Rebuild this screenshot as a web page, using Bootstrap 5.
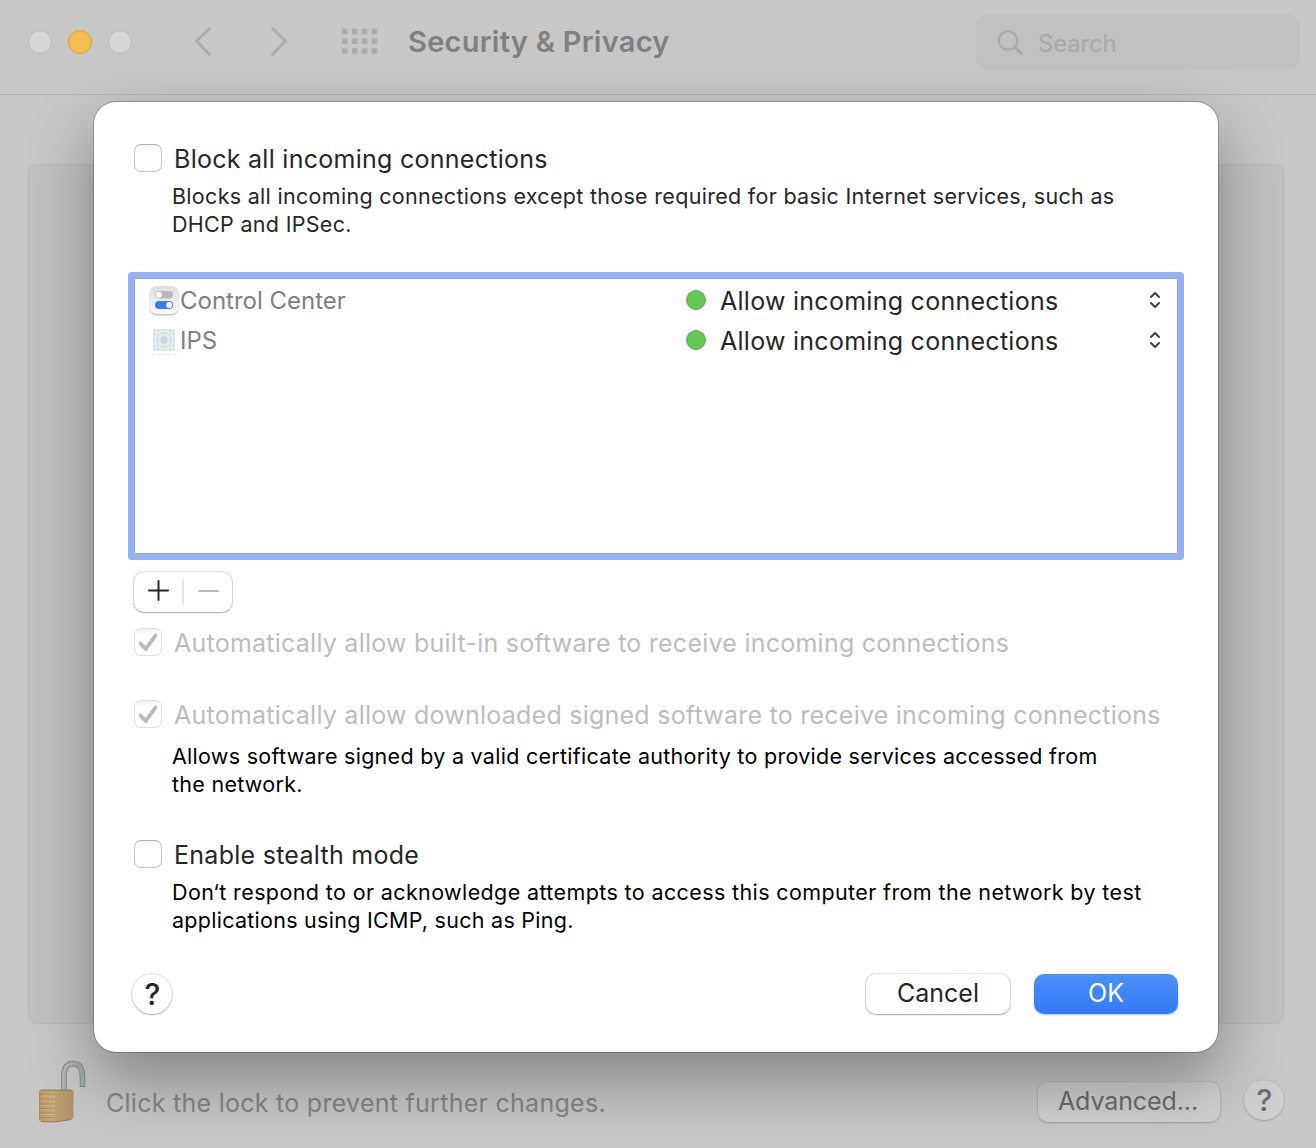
<!DOCTYPE html>
<html lang="en">
<head>
    <meta charset="UTF-8">
    <meta name="viewport" content="width=device-width, initial-scale=1.0">
    <title>Security &amp; Privacy</title>
    <link rel="stylesheet" href="https://cdn.jsdelivr.net/npm/bootstrap@5.3.0/dist/css/bootstrap.min.css">
    <style>
        body {
            font-family: Inter, "Liberation Sans", sans-serif;
            font-size: 25px;
            line-height: 28px;
            letter-spacing: .27px;
            color: #262626;
            background-color: #c7c7c7;
        }
        .window {
            height: 1148px;
        }
        .toolbar {
            height: 95px;
            padding: 0 16px 0 28px;
            border-bottom: 1px solid #b3b3b3;
        }
        .toolbar-items {
            height: 84px;
        }
        .light {
            width: 24px;
            height: 24px;
            border: 1px solid #b7b7b7;
            background-color: #d6d6d6;
        }
        .light-min {
            border-color: #dc9f38;
            background-color: #f5bf4f;
        }
        .window-title {
            font-size: 29px;
            font-weight: 600;
            color: #808080;
        }
        .search-box {
            width: 324px;
            height: 56px;
            border-radius: 12px;
            background-color: #c1c1c1;
            color: #a9a9a9;
            font-size: 24px;
            letter-spacing: -.2px;
        }
        .pane {
            flex: none;
            margin: 69px 32px 0 28px;
            height: 860px;
            border: 1px solid #b9b9b9;
            border-radius: 9px;
            background-color: #c1c1c1;
        }
        .window-footer {
            height: 124px;
            padding: 30px 32px 0 34px;
            gap: 24px;
        }
        .lock-text {
            color: #868686;
            padding-top: 35px;
            margin-left: -12px;
        }
        .sheet {
            left: 94px;
            top: 102px;
            width: 1124px;
            height: 950px;
            padding: 42px 40px 38px;
            border-radius: 22px;
            background-color: #fff;
            box-shadow: 0 0 0 1px rgba(0, 0, 0, .22), 0 28px 64px rgba(0, 0, 0, .34);
        }
        .option {
            height: 28px;
            gap: 12px;
        }
        .option-text {
            padding-top: 2px;
        }
        .tick {
            width: 28px;
            height: 28px;
            border: 1px solid #c6c6c6;
            border-top-color: #b5b5b5;
            border-radius: 7px;
            background: linear-gradient(#f3f3f3, #fff 25%);
        }
        .option-off {
            color: #bdbdbd;
            letter-spacing: .24px;
        }
        .option-off .tick {
            border-color: #dedede;
        }
        .tick svg {
            display: block;
            margin: -1px;
        }
        .note {
            font-size: 21.5px;
            letter-spacing: .3px;
            padding-left: 38px;
            white-space: nowrap;
        }
        .note-dark {
            color: #000;
            letter-spacing: .28px;
        }
        .note-wide {
            letter-spacing: .38px;
        }
        .note-end {
            letter-spacing: .27px;
        }
        .app-list {
            height: 276px;
            margin-top: 40px;
            padding-top: 2px;
            border: 1px solid #8ba4e3;
            border-radius: 1px;
            box-shadow: 0 0 0 6px #96b1f7;
        }
        .app-row {
            height: 40px;
            padding: 0 12px 0 13px;
        }
        .app-name {
            width: 538px;
            color: #7f7f7f;
            font-size: 24px;
            letter-spacing: 0;
        }
        .dot {
            width: 20px;
            height: 20px;
            margin: -2px 14px 0 0;
            border: 1px solid #57b24b;
            background-color: #62c554;
        }
        .push {
            height: 40px;
            border: 0;
            border-radius: 10px;
            color: #262626;
            background-color: #fff;
            box-shadow: 0 0 0 1px rgba(0, 0, 0, .1), 0 1px 2px rgba(0, 0, 0, .26);
        }
        .sheet-push {
            width: 144px;
            padding: 0 0 2px;
        }
        .push-ok {
            color: #fff;
            background: linear-gradient(#4b91f8, #3478f6);
            box-shadow: 0 1px 2px rgba(52, 120, 246, .4);
        }
        .plus-minus {
            width: 98px;
            margin-top: 18px;
        }
        .help {
            width: 40px;
            padding: 0 0 0 1px;
            border-radius: 50%;
            font-size: 30px;
            font-weight: 500;
        }
        .push-dim {
            margin-top: 26px;
            color: #6b6b6b;
            background-color: rgba(255, 255, 255, .14);
            box-shadow: 0 0 0 1px rgba(0, 0, 0, .05), 0 1px 2px rgba(0, 0, 0, .16);
        }
        .advanced {
            width: 182px;
            margin-top: 28px;
            padding: 0 2px 2px 0;
            letter-spacing: -.1px;
        }
    </style>
</head>
<body>
    <div class="window position-relative overflow-hidden d-flex flex-column">
        <header class="toolbar flex-shrink-0">
            <div class="toolbar-items d-flex align-items-center">
                <div class="d-flex gap-3">
                    <span class="light rounded-circle"></span>
                    <span class="light light-min rounded-circle"></span>
                    <span class="light rounded-circle"></span>
                </div>
                <svg class="ms-5" width="130" height="40" viewBox="0 0 130 40" fill="none" stroke="#acacac" stroke-width="2.800" stroke-linecap="round" stroke-linejoin="round">
                    <path d="M29.500 6.500L16.500 19L29.500 32.500M92.500 6.500L105.500 19L92.500 32.500"/>
                </svg>
                <svg width="98" height="40" viewBox="310 22 98 40" fill="none" stroke="#acacac" stroke-width="5.500" stroke-dasharray="5.500 4.400">
                    <path d="M342 31.500H378M342 41.300H378M342 51H378"/>
                </svg>
                <span class="window-title">Security &amp; Privacy</span>
                <div class="search-box d-flex align-items-center ms-auto">
                    <svg width="62" height="56" viewBox="0 0 62 56" fill="none" stroke="#a9a9a9" stroke-linecap="round">
                        <circle cx="32" cy="26.500" r="9.300" stroke-width="2"/>
                        <path d="M39 33.500L45.500 39.500" stroke-width="3"/>
                    </svg>
                    <span class="pt-1">Search</span>
                </div>
            </div>
        </header>

        <main class="pane"></main>

        <footer class="window-footer d-flex align-items-start">
            <svg width="60" height="80" viewBox="34 1054 60 80">
                <defs>
                    <linearGradient id="brassLeft"><stop offset="0" stop-color="#a98b60"/><stop offset=".15" stop-color="#bb9d6d"/><stop offset="1" stop-color="#c9ac7b"/></linearGradient>
                    <linearGradient id="brassRight"><stop offset="0" stop-color="#bc9e70"/><stop offset="1" stop-color="#b09266"/></linearGradient>
                </defs>
                <path d="M64 1090V1076Q64 1063.500 73 1063.500Q82.500 1063.500 82.500 1077V1087" fill="none" stroke="#7c8386" stroke-width="5.500"/>
                <path d="M64 1090V1076Q64 1063.500 73 1063.500Q82.500 1063.500 82.500 1077V1086" fill="none" stroke="#a3abae" stroke-width="4"/>
                <path d="M63.500 1090V1076Q64 1063.500 73 1063.500" fill="none" stroke="#b6bdbf" stroke-width="1.500"/>
                <path d="M39 1092Q39 1090 41 1090H55V1122L41 1121.500Q39 1121 39 1119Z" fill="url(#brassLeft)"/>
                <path d="M55 1090H72Q73.500 1090 73.500 1092V1117Q73 1119 71 1119.500L55 1122Z" fill="url(#brassRight)"/>
                <path d="M39.500 1094.500H55M39.500 1099.500H55M39.500 1104H55M39.500 1108.500H55M39.500 1113H55M39.500 1117.500H55" fill="none" stroke="#8e724b" stroke-opacity=".35"/>
                <path d="M39.500 1096H55M39.500 1101H55M39.500 1105.500H55M39.500 1110H55M39.500 1114.500H55" stroke="#dcc292" stroke-opacity=".5"/>
                <path d="M41 1090H72M41 1121.500L55 1122L71 1119.500" fill="none" stroke="#7a664a" stroke-opacity=".7"/>
            </svg>
            <span class="lock-text">Click the lock to prevent further changes.</span>
            <button class="push push-dim advanced ms-auto">Advanced...</button>
            <button class="push push-dim help">?</button>
        </footer>

        <section class="sheet position-absolute d-flex flex-column">
            <div class="option d-flex align-items-center">
                <span class="tick"></span>
                <span class="option-text">Block all incoming connections</span>
            </div>
            <p class="note mb-0" style="margin-top: 10px">Blocks all incoming connections except those required for basic Internet services, such as<br>DHCP and IPSec.</p>

            <div class="app-list flex-shrink-0">
                <div class="app-row d-flex align-items-center">
                    <div class="app-name d-flex align-items-center">
                        <svg width="32" height="40" viewBox="148 281 32 40">
                            <defs>
                                <linearGradient id="tile" x2="0" y2="1"><stop offset="0" stop-color="#dedede"/><stop offset="1" stop-color="#fbfbfb"/></linearGradient>
                            </defs>
                            <rect x="149.500" y="287" width="29" height="28.500" rx="7" fill="#c9c9c9"/>
                            <rect x="149.500" y="286" width="29" height="28" rx="7" fill="url(#tile)"/>
                            <rect x="155" y="291" width="18" height="7.500" rx="3.700" fill="#b9b9b9"/>
                            <circle cx="158.800" cy="294.800" r="3" fill="#fff"/>
                            <rect x="155" y="301" width="18" height="8" rx="4" fill="#3a7bee"/>
                            <circle cx="169.200" cy="305" r="3" fill="#fff"/>
                        </svg>
                        <span>Control Center</span>
                    </div>
                    <span class="dot rounded-circle"></span>
                    <span>Allow incoming connections</span>
                    <svg class="ms-auto" width="20" height="40" viewBox="1145 281 20 40" fill="none" stroke="#404040" stroke-width="2" stroke-linecap="round" stroke-linejoin="round">
                        <path d="M1151 297L1155 293L1159 297M1151 303L1155 307L1159 303"/>
                    </svg>
                </div>
                <div class="app-row d-flex align-items-center">
                    <div class="app-name d-flex align-items-center">
                        <svg width="32" height="40" viewBox="148 321 32 40">
                            <rect x="150" y="327.500" width="28" height="27.500" rx="6" fill="#ededed"/>
                            <rect x="150" y="326.500" width="28" height="27.500" rx="6" fill="#fff"/>
                            <rect x="153" y="329" width="22" height="22" rx="2" fill="#d3dfe4"/>
                            <g fill="none" stroke="#edf3f5" stroke-width=".9">
                                <path d="M156 329V351M160 329V351M168 329V351M172 329V351M153 332H175M153 336H175M153 344H175M153 348H175"/>
                                <circle cx="164" cy="340" r="9.500"/>
                                <circle cx="164" cy="340" r="5.500"/>
                            </g>
                            <circle cx="164" cy="340" r="3.800" fill="#c8d6dc"/>
                        </svg>
                        <span>IPS</span>
                    </div>
                    <span class="dot rounded-circle"></span>
                    <span>Allow incoming connections</span>
                    <svg class="ms-auto" width="20" height="40" viewBox="1145 321 20 40" fill="none" stroke="#404040" stroke-width="2" stroke-linecap="round" stroke-linejoin="round">
                        <path d="M1151 337L1155 333L1159 337M1151 343L1155 347L1159 343"/>
                    </svg>
                </div>
            </div>

            <div class="push plus-minus flex-shrink-0">
                <svg class="d-block" width="98" height="40" viewBox="134 572 98 40" fill="none" stroke-linecap="round">
                    <path d="M149 590.500H168M158.500 581V600" stroke="#262626" stroke-width="2"/>
                    <path d="M183 580V604" stroke="#dedede" stroke-width="1.500" stroke-linecap="butt"/>
                    <path d="M199 591H218" stroke="#bdbdbd" stroke-width="2"/>
                </svg>
            </div>

            <div class="option option-off d-flex align-items-center mt-3">
                <span class="tick"><svg width="28" height="28" viewBox="0 0 28 28" fill="none" stroke="#bababa" stroke-width="3.800" stroke-linecap="round" stroke-linejoin="round"><path d="M6.500 15.500L11.800 21L21.500 7.500"/></svg></span>
                <span class="option-text">Automatically allow built-in software to receive incoming connections</span>
            </div>
            <div class="option option-off d-flex align-items-center" style="margin-top: 44px">
                <span class="tick"><svg width="28" height="28" viewBox="0 0 28 28" fill="none" stroke="#bababa" stroke-width="3.800" stroke-linecap="round" stroke-linejoin="round"><path d="M6.500 15.500L11.800 21L21.500 7.500"/></svg></span>
                <span class="option-text">Automatically allow downloaded signed software to receive incoming connections</span>
            </div>
            <p class="note note-dark mb-0" style="margin-top: 14px">Allows software signed by a valid certificate authority to provide services accessed from<br>the network.</p>

            <div class="option d-flex align-items-center" style="margin-top: 42px">
                <span class="tick"></span>
                <span class="option-text">Enable stealth mode</span>
            </div>
            <p class="note note-dark note-wide mb-0" style="margin-top: 10px">Don‘t respond to or acknowledge attempts to access this computer from the network by test<br><span class="note-end">applications using ICMP, such as Ping.</span></p>

            <div class="d-flex gap-4 mt-auto">
                <button class="push help me-auto" style="margin-left: -2px">?</button>
                <button class="push sheet-push">Cancel</button>
                <button class="push push-ok sheet-push">OK</button>
            </div>
        </section>
    </div>
    <script src="https://cdn.jsdelivr.net/npm/bootstrap@5.3.0/dist/js/bootstrap.bundle.min.js"></script>
</body>
</html>
